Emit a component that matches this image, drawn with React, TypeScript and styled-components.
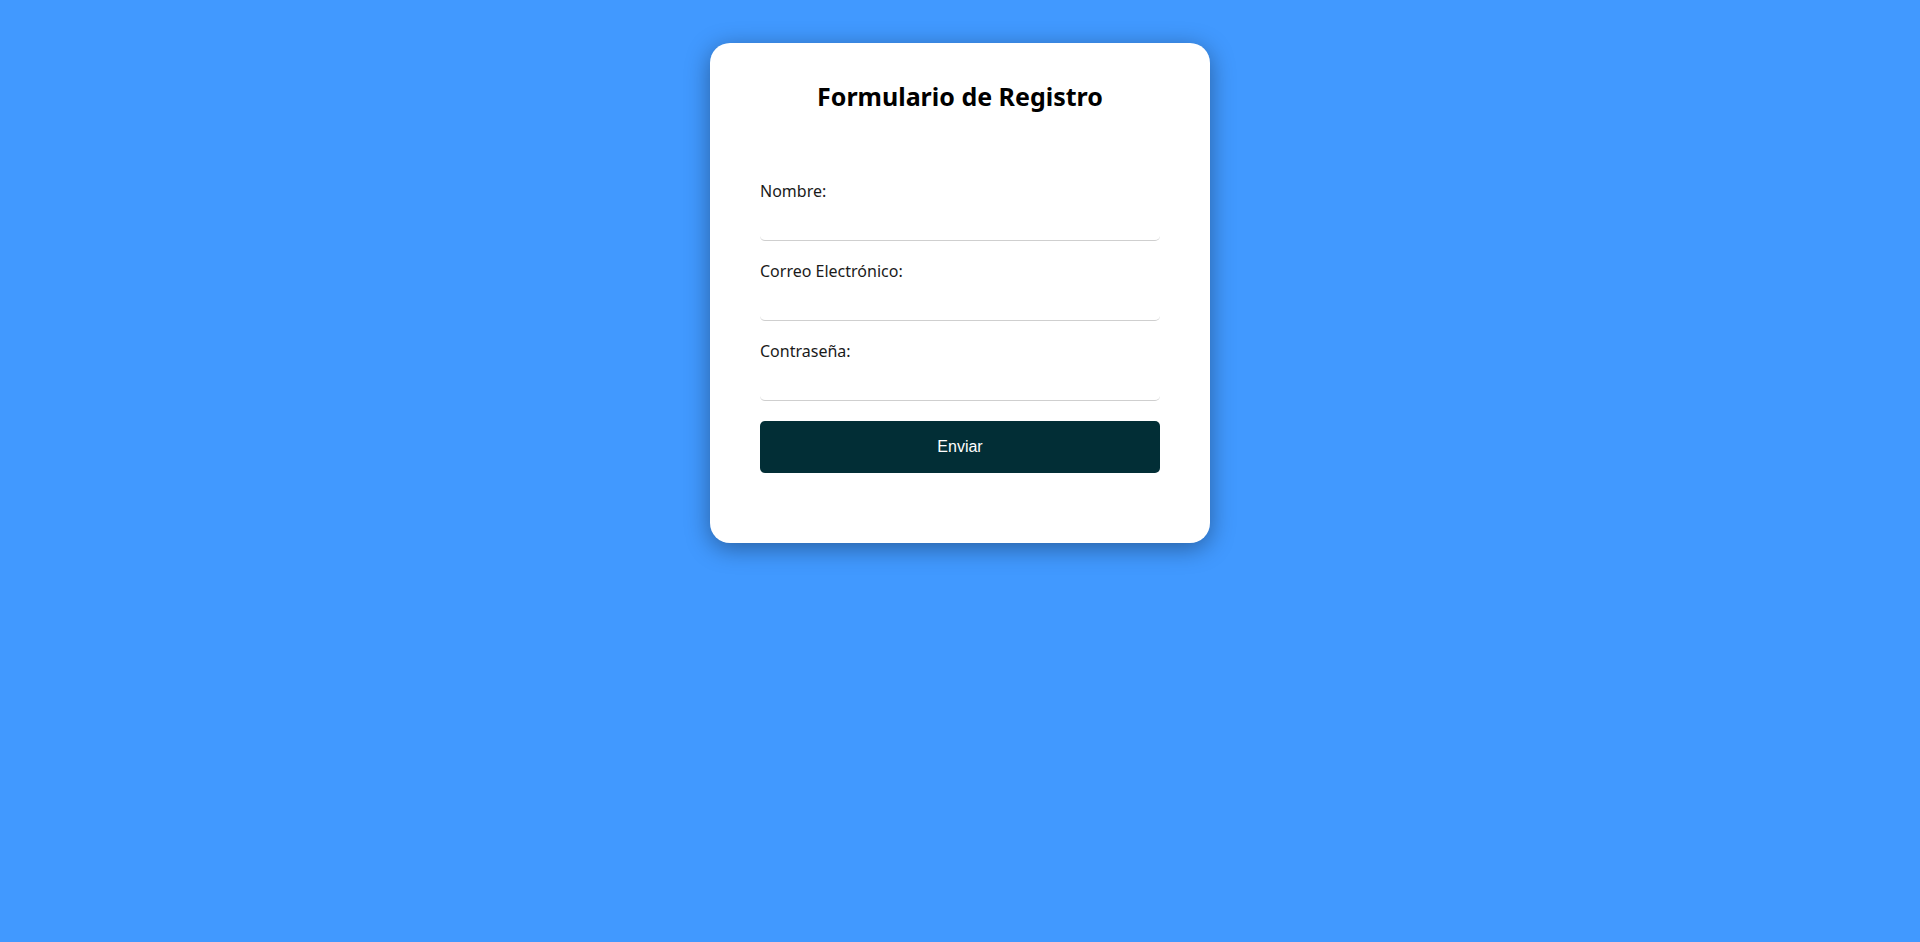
import React from "react";
import styled, { createGlobalStyle } from "styled-components";

const GlobalStyle = createGlobalStyle`
  html, body {
    margin: 0;
    padding: 0;
    background: #4199ff;
    min-height: 100%;
  }
  body {
    font-family: "Noto Sans", "Open Sans", sans-serif;
  }
  * { box-sizing: border-box; }
`;

const Page = styled.main`
  display: flex;
  justify-content: center;
  align-items: flex-start;
  padding-top: 43px;
  min-height: 942px;
`;

const Card = styled.form`
  width: 500px;
  background: #ffffff;
  border-radius: 20px;
  padding: 36px 50px 70px;
  box-shadow: 0 5px 24px rgba(0, 0, 0, 0.38);
  display: flex;
  flex-direction: column;
`;

const Title = styled.h2`
  margin: 0 0 68px;
  text-align: center;
  font-family: "Noto Sans", sans-serif;
  font-weight: 700;
  font-size: 25px;
  line-height: 34px;
  color: #000;
`;

const Field = styled.div`
  display: flex;
  flex-direction: column;
  margin-bottom: 20px;
`;

const Label = styled.label`
  font-family: "Noto Sans", sans-serif;
  font-size: 16px;
  line-height: 20px;
  color: #1a1a1a;
`;

const Input = styled.input`
  margin-top: 5px;
  height: 35px;
  border: none;
  border-bottom: 1px solid #cfcfcf;
  border-radius: 5px;
  outline: none;
  background: transparent;
  font-size: 16px;
  padding: 0 8px;
`;

const Button = styled.button`
  height: 52px;
  border: none;
  border-radius: 5px;
  background: #022e36;
  color: #ffffff;
  font-family: "Liberation Sans", Arial, sans-serif;
  font-size: 16px;
  cursor: pointer;
`;

export default function App() {
  return (
    <>
      <GlobalStyle />
      <Page>
        <Card onSubmit={(e) => e.preventDefault()}>
          <Title>Formulario de Registro</Title>
          <Field>
            <Label htmlFor="nombre">Nombre:</Label>
            <Input id="nombre" type="text" />
          </Field>
          <Field>
            <Label htmlFor="correo">Correo Electrónico:</Label>
            <Input id="correo" type="email" />
          </Field>
          <Field>
            <Label htmlFor="pass">Contraseña:</Label>
            <Input id="pass" type="password" />
          </Field>
          <Button type="submit">Enviar</Button>
        </Card>
      </Page>
    </>
  );
}
